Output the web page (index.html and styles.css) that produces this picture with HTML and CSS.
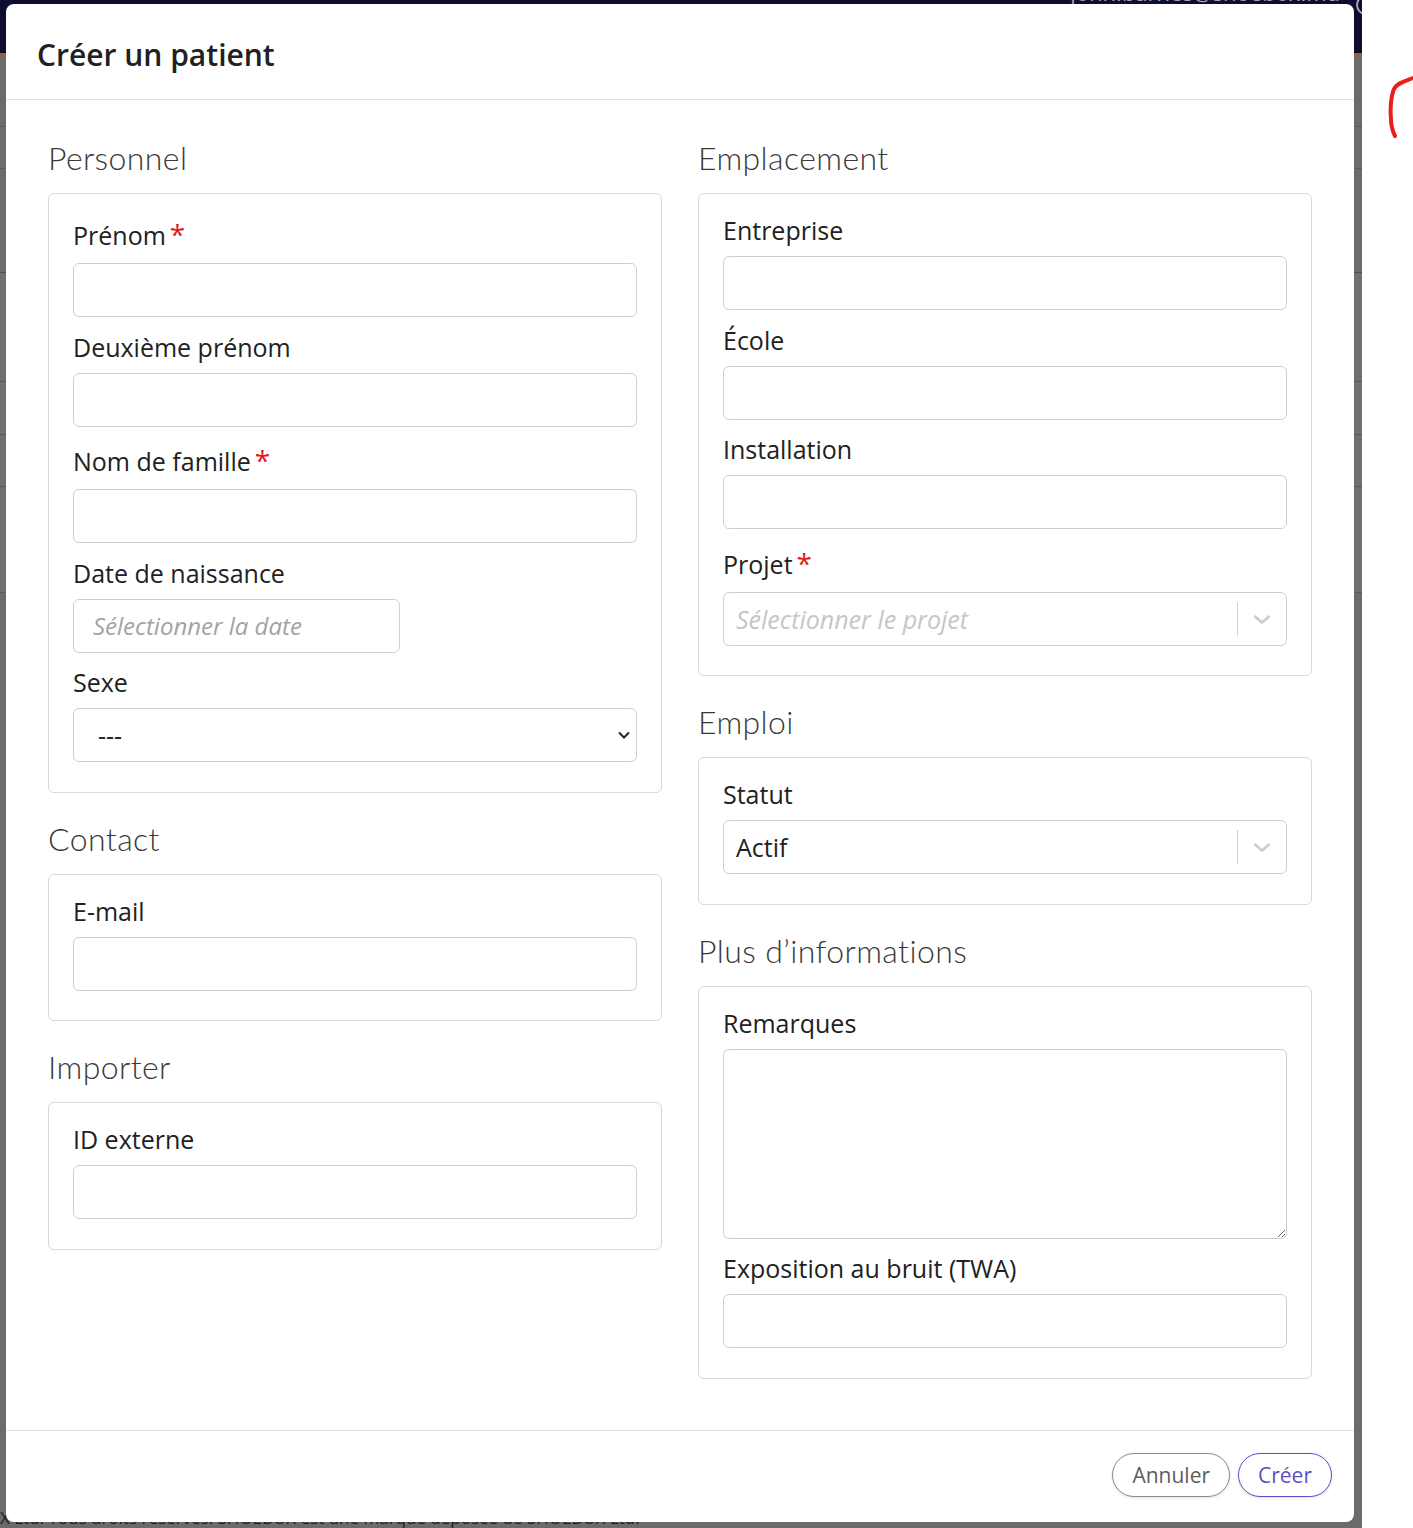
FILE: index.html
```html
<!DOCTYPE html>
<html lang="fr">
<head>
  <meta charset="UTF-8">
  <meta name="viewport" content="width=device-width, initial-scale=1.0">
  <title>Créer un patient | Shoebox</title>
  <link rel="stylesheet" href="styles.css">
</head>
<body>
  <!-- dimmed app behind the dialog -->
  <div class="app">
    <div class="navbar">
      <span class="user">john.barnes@shoebox.md</span>
      <span class="globe"></span>
    </div>
    <div class="page">
      <div class="row r1"></div>
      <div class="row r2"></div>
      <div class="row r3"></div>
      <div class="row r4"></div>
      <div class="row r5"></div>
      <div class="row r6"></div>
      <div class="row r7"></div>
    </div>
    <p class="copyright">X Ltd. Tous droits réservés. SHOEBOX est une marque déposée de SHOEBOX Ltd.</p>
  </div>

  <svg class="scribble" width="30" height="70" viewBox="0 0 30 70">
    <path d="M28 4 C20 7 12 9 9 15 C6 22 5 35 6 45 C6 52 8 58 10 62" fill="none" stroke="#e8201c" stroke-width="4" stroke-linecap="round"/>
  </svg>

  <div class="modal">
    <div class="modal-header">
      <h2>Créer un patient</h2>
    </div>

    <div class="modal-body">
      <div class="col">
        <section class="group">
          <h3>Personnel</h3>
          <div class="box">
            <div class="field">
              <label class="req" for="prenom">Prénom</label>
              <input type="text" id="prenom">
            </div>
            <div class="field">
              <label for="deuxieme">Deuxième prénom</label>
              <input type="text" id="deuxieme">
            </div>
            <div class="field">
              <label class="req" for="nom">Nom de famille</label>
              <input type="text" id="nom">
            </div>
            <div class="field">
              <label for="naissance">Date de naissance</label>
              <input type="text" id="naissance" class="date" placeholder="Sélectionner la date">
            </div>
            <div class="field">
              <label for="sexe">Sexe</label>
              <div class="select-wrap">
                <select id="sexe" class="native">
                  <option>---</option>
                  <option>Homme</option>
                  <option>Femme</option>
                </select>
                <svg class="caret" width="14" height="10" viewBox="0 0 14 10"><path d="M2 2.5 L7 7.5 L12 2.5" fill="none" stroke="#222" stroke-width="2"/></svg>
              </div>
            </div>
          </div>
        </section>

        <section class="group">
          <h3>Contact</h3>
          <div class="box">
            <div class="field">
              <label for="email">E-mail</label>
              <input type="text" id="email">
            </div>
          </div>
        </section>

        <section class="group">
          <h3>Importer</h3>
          <div class="box">
            <div class="field">
              <label for="extid">ID externe</label>
              <input type="text" id="extid">
            </div>
          </div>
        </section>
      </div>

      <div class="col">
        <section class="group">
          <h3>Emplacement</h3>
          <div class="box">
            <div class="field">
              <label for="entreprise">Entreprise</label>
              <input type="text" id="entreprise">
            </div>
            <div class="field">
              <label for="ecole">École</label>
              <input type="text" id="ecole">
            </div>
            <div class="field">
              <label for="installation">Installation</label>
              <input type="text" id="installation">
            </div>
            <div class="field">
              <label class="req">Projet</label>
              <div class="combo">
                <span class="combo-value placeholder">Sélectionner le projet</span>
                <span class="combo-sep"></span>
                <svg class="combo-arrow" width="20" height="20" viewBox="0 0 20 20"><path d="M2.5 7 L10 13.5 L17.5 7" fill="none" stroke="#cccccc" stroke-width="2.6"/></svg>
              </div>
            </div>
          </div>
        </section>

        <section class="group">
          <h3>Emploi</h3>
          <div class="box">
            <div class="field">
              <label>Statut</label>
              <div class="combo">
                <span class="combo-value">Actif</span>
                <span class="combo-sep"></span>
                <svg class="combo-arrow" width="20" height="20" viewBox="0 0 20 20"><path d="M2.5 7 L10 13.5 L17.5 7" fill="none" stroke="#cccccc" stroke-width="2.6"/></svg>
              </div>
            </div>
          </div>
        </section>

        <section class="group">
          <h3>Plus d’informations</h3>
          <div class="box">
            <div class="field">
              <label for="remarques">Remarques</label>
              <textarea id="remarques"></textarea>
            </div>
            <div class="field">
              <label for="twa">Exposition au bruit (TWA)</label>
              <input type="text" id="twa">
            </div>
          </div>
        </section>
      </div>
    </div>

    <div class="modal-footer">
      <button type="button" class="btn">Annuler</button>
      <button type="button" class="btn btn-primary">Créer</button>
    </div>
  </div>
</body>
</html>
```

FILE: styles.css
```css
body {
  margin: 0;
  padding: 0;
  background-color: #ffffff;
  font-family: "Open Sans", "Noto Sans", sans-serif;
  color: #212121;
}

/* background page, dimmed by the backdrop */
.app {
  position: relative;
  width: 1362px;
  height: 1528px;
  overflow: hidden;
  background-color: #6b6b6b;
}

.navbar {
  position: relative;
  height: 53px;
  background-color: #0e0c2f;
  border-bottom: 3px solid #94602e;
}

.user {
  position: absolute;
  top: -21px;
  right: 22px;
  font-size: 22px;
  line-height: 26px;
  color: #a4a3b8;
}

.globe {
  position: absolute;
  top: -5px;
  left: 1356px;
  width: 16px;
  height: 16px;
  border: 2px solid #a4a3b8;
  border-radius: 50%;
}

.row {
  border-bottom: 1px solid #5a5a5a;
}

.r1 { height: 70px; }
.r2 { height: 41px; }
.r3 { height: 103px; border-bottom-color: #4b4b68; }
.r4 { height: 108px; background-color: #707070; }
.r5 { height: 52px; background-color: #707070; }
.r6 { height: 51px; background-color: #707070; }
.r7 { height: 105px; background-color: #707070; }

.copyright {
  position: absolute;
  left: 0;
  bottom: -2px;
  margin: 0;
  font-size: 17px;
  line-height: 24px;
  color: #1c1c1c;
}

.scribble {
  position: absolute;
  left: 1385px;
  top: 74px;
}

/* dialog */
.modal {
  position: absolute;
  left: 6px;
  top: 4px;
  width: 1348px;
  height: 1518px;
  display: flex;
  flex-direction: column;
  background-color: #ffffff;
  border-radius: 8px;
  overflow: hidden;
}

.modal-header {
  padding: 28px 31px 22px;
  border-bottom: 1px solid #e2e2e2;
}

.modal-header h2 {
  margin: 0;
  font-size: 30px;
  line-height: 45px;
  font-weight: 600;
  color: #212121;
}

.modal-body {
  flex: 1;
  display: grid;
  grid-template-columns: 1fr 1fr;
  column-gap: 36px;
  padding: 39px 42px 0;
  align-items: start;
}

.group h3 {
  margin: 0 0 16px;
  font-family: Lato, "Open Sans", sans-serif;
  font-weight: 300;
  font-size: 32px;
  line-height: 38px;
  letter-spacing: 0.4px;
  color: #3a3a3a;
}

.group + .group h3 {
  margin-top: 27px;
}

.box {
  display: flex;
  flex-direction: column;
  gap: 11.5px;
  padding: 18px 24px 29.5px;
  border: 1px solid #d9d9d9;
  border-radius: 6px;
}

.field {
  display: flex;
  flex-direction: column;
}

.field label {
  font-size: 25px;
  line-height: 36px;
  margin-bottom: 8px;
  color: #212121;
}

.field label.req {
  padding: 4px 0 2px;
}

.field label.req::after {
  content: "*";
  margin-left: 4px;
  font-size: 28px;
  color: #e3191c;
}

input,
textarea,
select {
  box-sizing: border-box;
  font-family: "Open Sans", "Noto Sans", sans-serif;
  font-size: 25px;
  color: #212121;
  border: 1px solid #cfcfcf;
  border-radius: 6px;
  background-color: #ffffff;
}

input {
  height: 54px;
  padding: 0 12px;
}

input.date {
  width: 327px;
  padding-left: 19px;
  font-size: 24px;
}

input::placeholder {
  font-style: italic;
  color: #a3a3a3;
}

textarea {
  height: 190px;
  padding: 8px 12px;
}

.select-wrap {
  position: relative;
}

select.native {
  appearance: none;
  width: 100%;
  height: 54px;
  padding: 0 24px;
}

.caret {
  position: absolute;
  right: 6px;
  top: 22px;
}

.combo {
  box-sizing: border-box;
  display: flex;
  align-items: center;
  height: 54px;
  padding-left: 12px;
  border: 1px solid #cfcfcf;
  border-radius: 6px;
}

.combo-value {
  flex: 1;
  font-size: 25px;
  color: #212121;
}

.combo-value.placeholder {
  font-style: italic;
  color: #c6c6c6;
}

.combo-sep {
  align-self: stretch;
  width: 1px;
  margin: 9px 0;
  background-color: #d4d4d4;
}

.combo-arrow {
  margin: 0 14px 0 14px;
}

.modal-footer {
  display: flex;
  justify-content: flex-end;
  gap: 8px;
  padding: 22px 22px 25px;
  border-top: 1px solid #e2e2e2;
}

.btn {
  height: 44px;
  padding: 0 19px;
  font-family: "Open Sans", "Noto Sans", sans-serif;
  font-size: 21px;
  color: #5c5c5c;
  background-color: #ffffff;
  border: 1px solid #8c8c8c;
  border-radius: 22px;
  box-shadow: 0 1px 3px rgba(0, 0, 0, 0.12);
}

.btn-primary {
  color: #5a4fc2;
  border-color: #5b50c8;
}
```
